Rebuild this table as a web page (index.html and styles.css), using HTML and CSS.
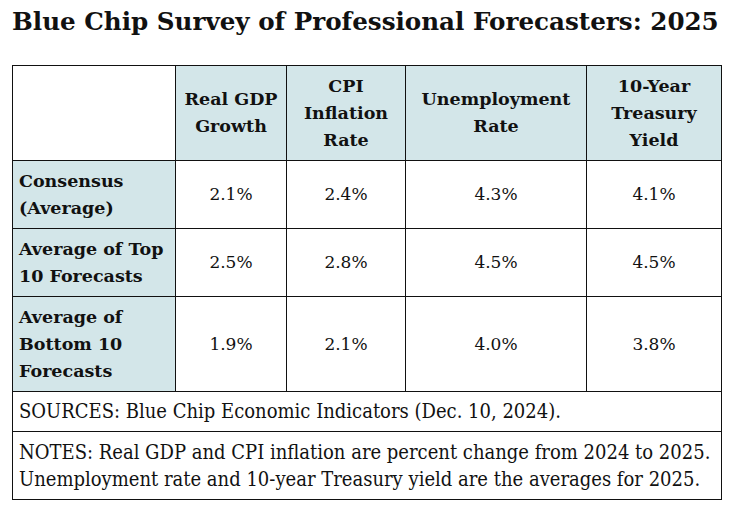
FILE: index.html
```html
<!DOCTYPE html>
<html lang="en">
<head>
    <meta charset="UTF-8">
    <title>Blue Chip Survey of Professional Forecasters: 2025</title>
    <link rel="stylesheet" href="styles.css">
</head>
<body>
    <h1 class="title">Blue Chip Survey of Professional Forecasters: 2025</h1>

    <table class="survey">
        <thead>
            <tr>
                <th class="corner"></th>
                <th class="col-gdp">Real GDP<br>Growth</th>
                <th class="col-cpi">CPI<br>Inflation<br>Rate</th>
                <th class="col-unemp">Unemployment<br>Rate</th>
                <th class="col-yield">10-Year<br>Treasury<br>Yield</th>
            </tr>
        </thead>
        <tbody>
            <tr>
                <th class="row-label">Consensus<br>(Average)</th>
                <td>2.1%</td>
                <td>2.4%</td>
                <td>4.3%</td>
                <td>4.1%</td>
            </tr>
            <tr>
                <th class="row-label">Average of Top<br>10 Forecasts</th>
                <td>2.5%</td>
                <td>2.8%</td>
                <td>4.5%</td>
                <td>4.5%</td>
            </tr>
            <tr>
                <th class="row-label">Average of<br>Bottom 10<br>Forecasts</th>
                <td>1.9%</td>
                <td>2.1%</td>
                <td>4.0%</td>
                <td>3.8%</td>
            </tr>
        </tbody>
        <tfoot>
            <tr>
                <td colspan="5" class="note sources">SOURCES: Blue Chip Economic Indicators (Dec. 10, 2024).</td>
            </tr>
            <tr>
                <td colspan="5" class="note">NOTES: Real GDP and CPI inflation are percent change from 2024 to 2025.<br>Unemployment rate and 10-year Treasury yield are the averages for 2025.</td>
            </tr>
        </tfoot>
    </table>
</body>
</html>
```

FILE: styles.css
```css
body {
    margin: 0;
    padding: 5px 12px;
    background-color: #fff;
    color: #111;
    font-family: 'DejaVu Serif', serif;
}

.title {
    margin: 0 0 27px 0;
    font-size: 24.6px;
    font-weight: bold;
    line-height: 33px;
    white-space: nowrap;
}

.survey {
    border-collapse: collapse;
    width: 710px;
    font-size: 17px;
    line-height: 27px;
}

.survey th,
.survey td {
    border: 1.5px solid #111;
    padding: 6.5px 6px;
}

.survey thead th {
    background-color: #d3e6e9;
    text-align: center;
    font-weight: bold;
    font-size: 17.5px;
}

.survey thead th.corner {
    background-color: #fff;
    width: 150px;
}

.col-gdp { width: 98px; }
.col-cpi { width: 106px; }
.col-unemp { width: 168px; }
.col-yield { width: 122px; }

.row-label {
    background-color: #d3e6e9;
    text-align: left;
    font-weight: bold;
    font-size: 17.5px;
}

.survey tbody td {
    text-align: center;
}

.note {
    font-stretch: condensed;
    text-align: left;
    font-size: 20px;
}

.survey td.sources {
    padding-top: 6px;
    padding-bottom: 6px;
}
```
